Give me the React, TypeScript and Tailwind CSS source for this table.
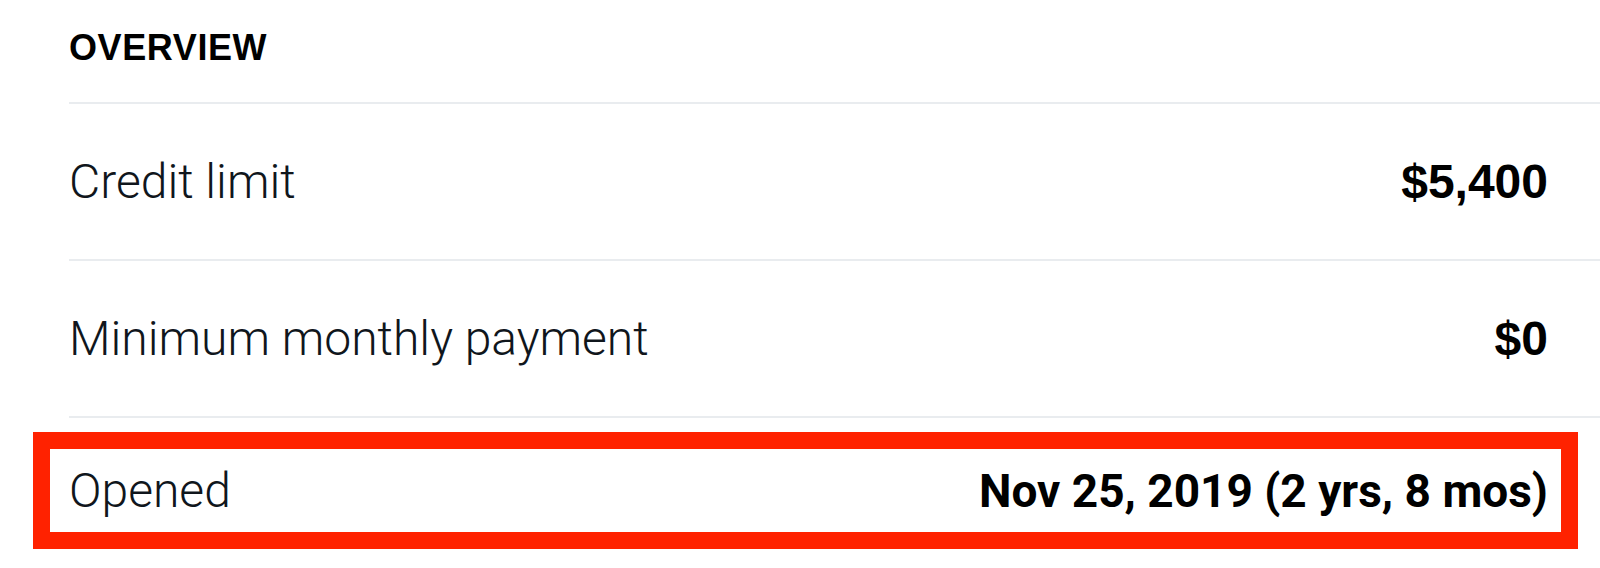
const rows = [
  { label: "Credit limit", value: "$5,400" },
  { label: "Minimum monthly payment", value: "$0" },
]

export default function App() {
  return (
    <main className="h-[568px] w-[1600px] overflow-hidden bg-white font-['Liberation_Sans',Arial,sans-serif] text-[#10161c]">
      <div className="pl-[69px]">
        <header className="h-[104px] border-b-2 border-[#e9ecef] pt-[30px]">
          <h2 className="text-[36px] font-bold leading-[36px] tracking-[0.6px] text-black">OVERVIEW</h2>
        </header>

        {rows.map((row) => (
          <div
            key={row.label}
            className="flex h-[157px] items-center justify-between border-b-2 border-[#e9ecef] pr-[52px]"
          >
            <span className="font-['Roboto',sans-serif] text-[48px] font-light leading-none">
              {row.label}
            </span>
            <span className="text-[48px] font-bold leading-none text-black">{row.value}</span>
          </div>
        ))}
      </div>

      {/* highlighted row */}
      <div className="mt-[14px] ml-[33px] mr-[22px] flex h-[117px] items-center justify-between border-[17px] border-[#ff2200] pl-[19px] pr-[13px]">
        <span className="font-['Roboto',sans-serif] text-[48px] font-light leading-none">Opened</span>
        <span className="font-['Roboto',sans-serif] text-[46px] font-bold leading-none text-black">
          Nov 25, 2019 (2 yrs, 8 mos)
        </span>
      </div>
    </main>
  )
}
